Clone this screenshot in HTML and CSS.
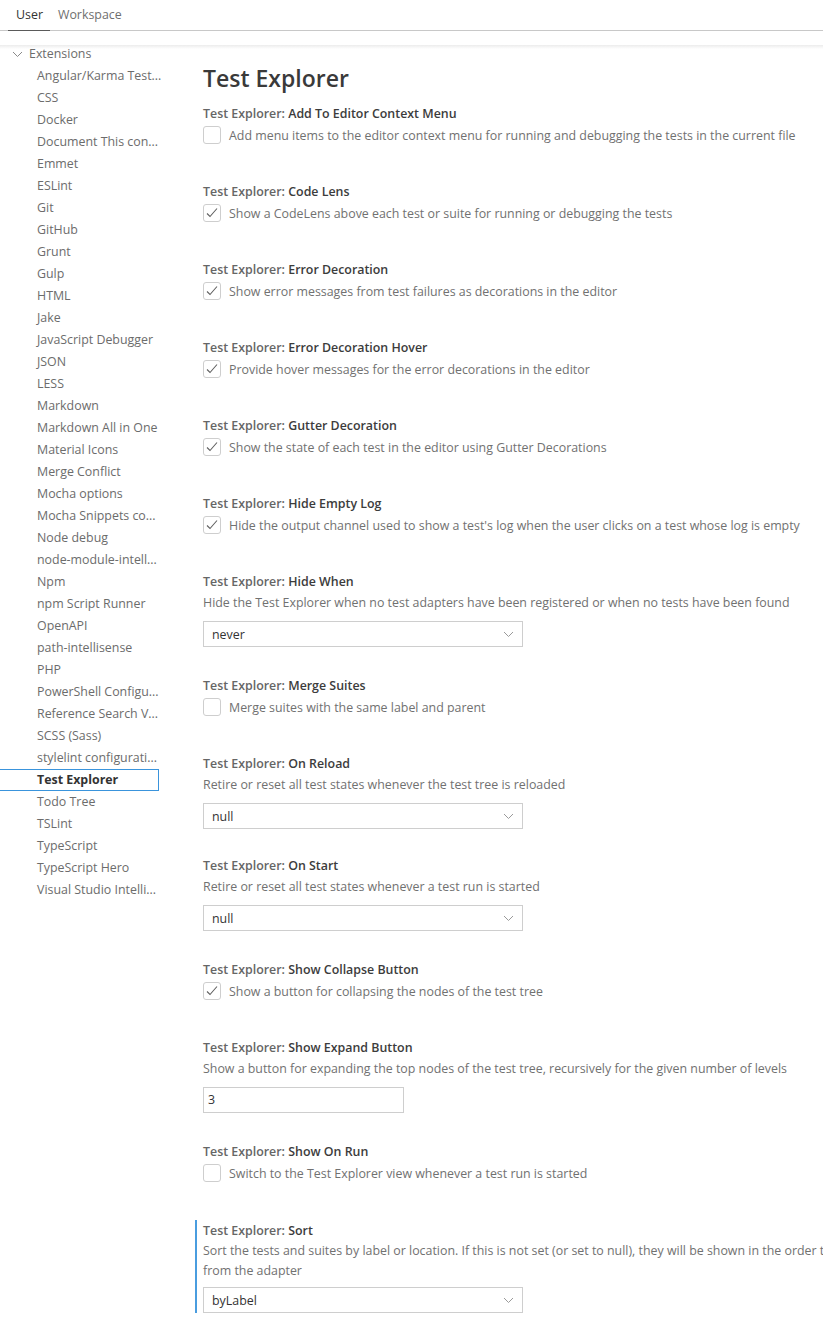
FILE: index.html
```html
<!DOCTYPE html>
<html>
<head>
<meta charset="utf-8">
<link rel="stylesheet" href="styles.css">
</head>
<body>
<div class="tabs">
  <div class="tab active">User</div>
  <div class="tab">Workspace</div>
</div>
<div class="content">
  <div class="sidebar">
    <div class="group"><svg class="chev" width="11" height="7" viewBox="0 0 11 7"><path d="M1 1l4.5 4.5L10 1" fill="none" stroke="#8a8a8a" stroke-width="1"/></svg>Extensions</div>
    <div class="item">Angular/Karma Test...</div>
    <div class="item">CSS</div>
    <div class="item">Docker</div>
    <div class="item">Document This con...</div>
    <div class="item">Emmet</div>
    <div class="item">ESLint</div>
    <div class="item">Git</div>
    <div class="item">GitHub</div>
    <div class="item">Grunt</div>
    <div class="item">Gulp</div>
    <div class="item">HTML</div>
    <div class="item">Jake</div>
    <div class="item">JavaScript Debugger</div>
    <div class="item">JSON</div>
    <div class="item">LESS</div>
    <div class="item">Markdown</div>
    <div class="item">Markdown All in One</div>
    <div class="item">Material Icons</div>
    <div class="item">Merge Conflict</div>
    <div class="item">Mocha options</div>
    <div class="item">Mocha Snippets co...</div>
    <div class="item">Node debug</div>
    <div class="item">node-module-intell...</div>
    <div class="item">Npm</div>
    <div class="item">npm Script Runner</div>
    <div class="item">OpenAPI</div>
    <div class="item">path-intellisense</div>
    <div class="item">PHP</div>
    <div class="item">PowerShell Configu...</div>
    <div class="item">Reference Search V...</div>
    <div class="item">SCSS (Sass)</div>
    <div class="item">stylelint configurati...</div>
    <div class="item selected">Test Explorer</div>
    <div class="item">Todo Tree</div>
    <div class="item">TSLint</div>
    <div class="item">TypeScript</div>
    <div class="item">TypeScript Hero</div>
    <div class="item">Visual Studio Intelli...</div>
  </div>
  <div class="main">
    <h1 class="heading">Test Explorer</h1>

    <div class="setting bool">
      <div class="title"><span class="cat">Test Explorer: </span>Add To Editor Context Menu</div>
      <div class="check-row"><span class="checkbox"></span><span class="desc">Add menu items to the editor context menu for running and debugging the tests in the current file</span></div>
    </div>

    <div class="setting bool">
      <div class="title"><span class="cat">Test Explorer: </span>Code Lens</div>
      <div class="check-row"><span class="checkbox"><svg width="16" height="16" viewBox="0 0 16 16"><path d="M3 8.5l3 3L13 3.5" fill="none" stroke="#616161" stroke-width="1.1"/></svg></span><span class="desc">Show a CodeLens above each test or suite for running or debugging the tests</span></div>
    </div>

    <div class="setting bool">
      <div class="title"><span class="cat">Test Explorer: </span>Error Decoration</div>
      <div class="check-row"><span class="checkbox"><svg width="16" height="16" viewBox="0 0 16 16"><path d="M3 8.5l3 3L13 3.5" fill="none" stroke="#616161" stroke-width="1.1"/></svg></span><span class="desc">Show error messages from test failures as decorations in the editor</span></div>
    </div>

    <div class="setting bool">
      <div class="title"><span class="cat">Test Explorer: </span>Error Decoration Hover</div>
      <div class="check-row"><span class="checkbox"><svg width="16" height="16" viewBox="0 0 16 16"><path d="M3 8.5l3 3L13 3.5" fill="none" stroke="#616161" stroke-width="1.1"/></svg></span><span class="desc">Provide hover messages for the error decorations in the editor</span></div>
    </div>

    <div class="setting bool">
      <div class="title"><span class="cat">Test Explorer: </span>Gutter Decoration</div>
      <div class="check-row"><span class="checkbox"><svg width="16" height="16" viewBox="0 0 16 16"><path d="M3 8.5l3 3L13 3.5" fill="none" stroke="#616161" stroke-width="1.1"/></svg></span><span class="desc">Show the state of each test in the editor using Gutter Decorations</span></div>
    </div>

    <div class="setting bool">
      <div class="title"><span class="cat">Test Explorer: </span>Hide Empty Log</div>
      <div class="check-row"><span class="checkbox"><svg width="16" height="16" viewBox="0 0 16 16"><path d="M3 8.5l3 3L13 3.5" fill="none" stroke="#616161" stroke-width="1.1"/></svg></span><span class="desc">Hide the output channel used to show a test's log when the user clicks on a test whose log is empty</span></div>
    </div>

    <div class="setting">
      <div class="title"><span class="cat">Test Explorer: </span>Hide When</div>
      <div class="desc block">Hide the Test Explorer when no test adapters have been registered or when no tests have been found</div>
      <div class="select"><span>never</span><svg width="11" height="7" viewBox="0 0 11 7"><path d="M1 1l4.5 4.5L10 1" fill="none" stroke="#9a9a9a" stroke-width="1"/></svg></div>
    </div>

    <div class="setting bool">
      <div class="title"><span class="cat">Test Explorer: </span>Merge Suites</div>
      <div class="check-row"><span class="checkbox"></span><span class="desc">Merge suites with the same label and parent</span></div>
    </div>

    <div class="setting tight">
      <div class="title"><span class="cat">Test Explorer: </span>On Reload</div>
      <div class="desc block">Retire or reset all test states whenever the test tree is reloaded</div>
      <div class="select"><span>null</span><svg width="11" height="7" viewBox="0 0 11 7"><path d="M1 1l4.5 4.5L10 1" fill="none" stroke="#9a9a9a" stroke-width="1"/></svg></div>
    </div>

    <div class="setting">
      <div class="title"><span class="cat">Test Explorer: </span>On Start</div>
      <div class="desc block">Retire or reset all test states whenever a test run is started</div>
      <div class="select"><span>null</span><svg width="11" height="7" viewBox="0 0 11 7"><path d="M1 1l4.5 4.5L10 1" fill="none" stroke="#9a9a9a" stroke-width="1"/></svg></div>
    </div>

    <div class="setting bool">
      <div class="title"><span class="cat">Test Explorer: </span>Show Collapse Button</div>
      <div class="check-row"><span class="checkbox"><svg width="16" height="16" viewBox="0 0 16 16"><path d="M3 8.5l3 3L13 3.5" fill="none" stroke="#616161" stroke-width="1.1"/></svg></span><span class="desc">Show a button for collapsing the nodes of the test tree</span></div>
    </div>

    <div class="setting">
      <div class="title"><span class="cat">Test Explorer: </span>Show Expand Button</div>
      <div class="desc block">Show a button for expanding the top nodes of the test tree, recursively for the given number of levels</div>
      <div class="input">3</div>
    </div>

    <div class="setting bool">
      <div class="title"><span class="cat">Test Explorer: </span>Show On Run</div>
      <div class="check-row"><span class="checkbox"></span><span class="desc">Switch to the Test Explorer view whenever a test run is started</span></div>
    </div>

    <div class="setting focused">
      <div class="title"><span class="cat">Test Explorer: </span>Sort</div>
      <div class="desc block">Sort the tests and suites by label or location. If this is not set (or set to null), they will be shown in the order they were received<br>from the adapter</div>
      <div class="select"><span>byLabel</span><svg width="11" height="7" viewBox="0 0 11 7"><path d="M1 1l4.5 4.5L10 1" fill="none" stroke="#9a9a9a" stroke-width="1"/></svg></div>
    </div>
  </div>
</div>
</body>
</html>
```

FILE: styles.css
```css
html, body {
  margin: 0;
  padding: 0;
  background: #ffffff;
  overflow: hidden;
}
body {
  font-family: "Open Sans", "Noto Sans", sans-serif;
  font-size: 12.4px;
  color: #616161;
  width: 823px;
  height: 1331px;
}
.tabs {
  display: flex;
  height: 30px;
  border-bottom: 1px solid #c8c8c8;
  padding-left: 8px;
}
.tab {
  line-height: 29px;
  padding: 0 8px;
  color: #6f6f6f;
}
.tab.active {
  color: #333333;
  border-bottom: 1px solid #5a5a5a;
  margin-bottom: -1px;
  padding-right: 7px;
}
.content {
  position: relative;
  display: flex;
  margin-top: 12px;
}
.content::before {
  content: "";
  position: absolute;
  left: 0;
  right: 0;
  top: 2px;
  height: 4px;
  background: linear-gradient(#ececec, rgba(255,255,255,0));
}
.sidebar {
  width: 159px;
  flex: none;
}
.group {
  height: 22px;
  line-height: 22px;
  display: flex;
  align-items: center;
  padding-left: 12px;
  color: #6c6c6c;
}
.group .chev {
  margin-right: 6px;
}
.item {
  height: 22px;
  line-height: 22px;
  padding-left: 37px;
  color: #6c6c6c;
  white-space: nowrap;
  box-sizing: border-box;
}
.item.selected {
  font-weight: 700;
  color: #333333;
  border: 1px solid #3a94dc;
  border-left: none;
  line-height: 20px;
}
.main {
  flex: 1;
  margin-left: 36px;
  min-width: 0;
  overflow: hidden;
}
.heading {
  margin: 0;
  font-size: 23px;
  font-weight: 600;
  color: #3a3a3a;
  line-height: 34px;
  padding-left: 8px;
  margin-top: 18px;
  margin-bottom: 9px;
}
.setting {
  border-left: 2px solid transparent;
  padding-left: 6px;
  padding-bottom: 29px;
}
.setting.bool {
  padding-bottom: 37px;
}
.setting.tight {
  padding-bottom: 27px;
}
.setting.focused {
  border-left-color: #4a9ddf;
  padding-top: 1px;
  padding-bottom: 0;
}
.title {
  line-height: 20px;
  font-weight: 600;
  color: #3c3c3c;
}
.title .cat {
  color: #666666;
}
.desc {
  color: #717171;
  white-space: nowrap;
}
.desc.block {
  line-height: 20px;
  margin-top: 1px;
}
.focused .desc.block {
  margin-top: 0;
}
.check-row {
  display: flex;
  align-items: center;
  height: 20px;
  margin-top: 1px;
}
.checkbox {
  width: 16px;
  height: 16px;
  border: 1px solid #cecece;
  border-radius: 3px;
  background: #fff;
  margin-right: 8px;
  flex: none;
  display: flex;
  align-items: center;
  justify-content: center;
}
.select {
  margin-top: 8px;
  height: 24px;
  border: 1px solid #cecece;
  display: flex;
  align-items: center;
  justify-content: space-between;
  padding: 0 8px;
  width: 302px;
  color: #333333;
}
.focused .select {
  margin-top: 6px;
}
.input {
  margin-top: 8px;
  width: 195px;
  height: 24px;
  line-height: 24px;
  border: 1px solid #cecece;
  padding-left: 4px;
  color: #333333;
}
```
